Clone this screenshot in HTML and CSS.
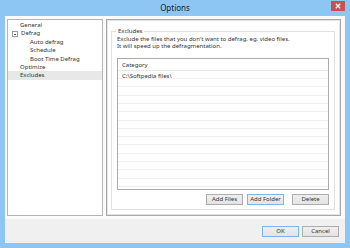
FILE: index.html
```html
<!DOCTYPE html>
<html lang="en">
<head>
    <meta charset="UTF-8">
    <link rel="stylesheet" href="styles.css">
    <title>Options</title>
</head>
<body>
    <div class="window">
        <div class="titlebar">
            <span></span>
            <span class="title">Options</span>
            <span class="close">
                <svg width="6" height="6" viewBox="0 0 6 6"><path d="M0.8 0.8 L5.2 5.2 M5.2 0.8 L0.8 5.2" stroke="#fff" stroke-width="1.3"/></svg>
            </span>
        </div>
        <div class="client">
            <div class="main">
                <ul class="tree">
                    <li class="lvl1">General</li>
                    <li class="lvl1 parent"><span class="toggle"></span>Defrag</li>
                    <li class="lvl2">Auto defrag</li>
                    <li class="lvl2">Schedule</li>
                    <li class="lvl2">Boot Time Defrag</li>
                    <li class="lvl1">Optimize</li>
                    <li class="lvl1 selected">Excludes</li>
                </ul>
                <div class="page">
                    <fieldset class="group">
                        <legend>Excludes</legend>
                        <p class="desc">Exclude the files that you don't want to defrag. eg. video files.<br>It will speed up the defragmentation.</p>
                        <div class="list">
                            <div class="list-head">Category</div>
                            <div class="row">C:\Softpedia files\</div>
                            <div class="row"></div>
                            <div class="row"></div>
                            <div class="row"></div>
                            <div class="row"></div>
                            <div class="row"></div>
                            <div class="row"></div>
                            <div class="row"></div>
                            <div class="row"></div>
                            <div class="row"></div>
                            <div class="row"></div>
                            <div class="row"></div>
                            <div class="row"></div>
                            <div class="row"></div>
                        </div>
                        <div class="actions">
                            <button class="btn">Add Files</button>
                            <button class="btn default">Add Folder</button>
                            <button class="btn gap">Delete</button>
                        </div>
                    </fieldset>
                </div>
            </div>
            <div class="footer">
                <button class="btn default">OK</button>
                <button class="btn">Cancel</button>
            </div>
        </div>
    </div>
</body>
</html>
```

FILE: styles.css
```css
body {
    margin: 0;
    font-family: "Noto Sans", "Open Sans", sans-serif;
    font-size: 6px;
    color: #333;
}

.window {
    width: 350px;
    height: 248px;
    box-sizing: border-box;
    background-color: #8ec6f3;
    padding: 0 5px 5px 5px;
    display: flex;
    flex-direction: column;
}

.titlebar {
    height: 16px;
    display: grid;
    grid-template-columns: 1fr auto 1fr;
    align-items: start;
}

.title {
    font-size: 8px;
    color: #1d1d1d;
    line-height: 15px;
}

.close {
    justify-self: end;
    width: 14px;
    height: 10px;
    margin-top: 1px;
    background-color: #c75050;
    display: flex;
    align-items: center;
    justify-content: center;
}

.close svg {
    display: block;
}

.client {
    flex: 1;
    background-color: #f0f0f0;
    display: flex;
    flex-direction: column;
}

.main {
    height: 203px;
    box-sizing: border-box;
    background-color: #fbfbfb;
    display: flex;
    gap: 3px;
    padding: 3px 4px 3px 2px;
}

.tree {
    width: 96px;
    box-sizing: border-box;
    margin: 0;
    padding: 1px 0 0 0;
    list-style: none;
    background-color: #fff;
    border: 1px solid #b4b4b4;
}

.tree li {
    height: 8.4px;
    line-height: 8.4px;
    white-space: nowrap;
}

.lvl1 {
    padding-left: 12px;
}

.lvl2 {
    padding-left: 22px;
}

.parent {
    display: flex;
    align-items: center;
    padding-left: 4px;
}

.toggle {
    width: 4px;
    height: 4px;
    border: 1px solid #9a9a9a;
    margin-right: 3px;
    position: relative;
}

.toggle::after {
    content: "";
    position: absolute;
    left: 1px;
    top: 2px;
    width: 2px;
    height: 1px;
    background-color: #555;
}

.selected {
    background-color: #e8e8e8;
}

.page {
    flex: 1;
    background-color: #fff;
    border: 1px solid #a8a8a8;
    box-shadow: inset 0 0 0 1px #e4e4e4;
    padding: 8px 5px 5px 4px;
    display: flex;
    flex-direction: column;
}

.group {
    flex: 1;
    margin: 0;
    padding: 0 5px 4px 5px;
    border: 1px solid #e0e0e0;
    min-height: 0;
    display: flex;
    flex-direction: column;
}

.group legend {
    padding: 0 2px;
    margin-left: -1px;
    line-height: 7px;
}

.desc {
    margin: 1px 0 7px 0;
    line-height: 7.4px;
}

.list {
    flex: 1;
    border: 1px solid #ababab;
    overflow: hidden;
}

.list-head {
    height: 11px;
    line-height: 13px;
    padding-left: 4px;
    border-bottom: 1px solid #e8e8e8;
}

.row {
    height: 8.3px;
    line-height: 10px;
    padding-left: 4px;
    border-bottom: 1px solid #f0f0f0;
    box-sizing: border-box;
}

.actions {
    display: flex;
    justify-content: flex-end;
    gap: 4px;
    margin-top: 4px;
}

.btn {
    width: 37px;
    height: 11px;
    padding: 0;
    font-family: inherit;
    font-size: 6px;
    color: #333;
    background: linear-gradient(#efefef, #e3e3e3);
    border: 1px solid #adadad;
    line-height: 9px;
}

.btn.default {
    border-color: #7eb4ea;
}

.btn.gap {
    margin-left: 4px;
}

.footer {
    flex: 1;
    display: flex;
    justify-content: flex-end;
    align-items: flex-end;
    gap: 3px;
    padding: 0 6px 6px 0;
}
```
